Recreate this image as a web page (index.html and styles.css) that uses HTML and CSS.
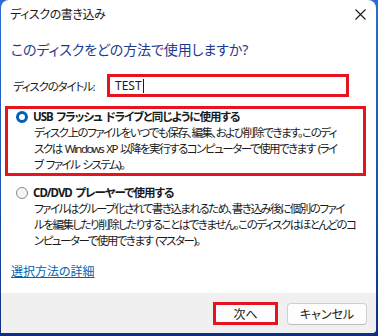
FILE: index.html
```html
<!DOCTYPE html>
<html lang="ja">
<head>
    <meta charset="utf-8">
    <title>ディスクの書き込み</title>
    <link rel="stylesheet" href="styles.css">
</head>
<body>

<div class="window">
    <header class="titlebar">
        <span>ディスクの書き込み</span>
        <svg class="close" width="11" height="11" viewBox="0 0 11 11" aria-hidden="true">
            <path d="M0.5 0.5 L10.5 10.5 M10.5 0.5 L0.5 10.5" stroke="#1a1a1a" stroke-width="1.1" fill="none"/>
        </svg>
    </header>

    <div class="content">
        <h1 class="instruction">このディスクをどの方法で使用しますか?</h1>

        <div class="title-row">
            <label for="disc-title">ディスクのタイトル:</label>
            <div class="input mark">TEST<span class="caret"></span></div>
        </div>

        <div class="option mark">
            <span class="radio checked"></span>
            <div>
                <div class="opt-title">USB フラッシュ ドライブと同じように使用する</div>
                <div class="opt-desc">ディスク上のファイルをいつでも保存、編集、および削除できます。このディ<br>スクは Windows XP 以降を実行するコンピューターで使用できます (ライ<br>ブ ファイル システム)。</div>
            </div>
        </div>

        <div class="option">
            <span class="radio"></span>
            <div>
                <div class="opt-title">CD/DVD プレーヤーで使用する</div>
                <div class="opt-desc">ファイルはグループ化されて書き込まれるため、書き込み後に個別のファイ<br>ルを編集したり削除したりすることはできません。このディスクはほとんどのコ<br>ンピューターで使用できます (マスター)。</div>
            </div>
        </div>

        <a class="help" href="#">選択方法の詳細</a>
    </div>

    <footer class="buttons">
        <button class="btn mark">次へ</button>
        <button class="btn">キャンセル</button>
    </footer>
</div>

</body>
</html>
```

FILE: styles.css
```css
:root {
    --red: #e5141f;
    --ui: "Noto Sans", "Noto Sans CJK JP", sans-serif;
}

body {
    margin: 0;
    width: 378px;
    height: 336px;
    overflow: hidden;
    background: linear-gradient(180deg, #2a6fd0, #1a4fae 60%, #0d2f80);
    font-family: var(--ui);
    font-size: 12px;
    font-feature-settings: "palt";
    color: #1a1a1a;
}

.window {
    display: flex;
    flex-direction: column;
    width: 375px;
    height: 333px;
    margin-left: 1px;
    background: white;
    border-radius: 8px 8px 4px 0;
    overflow: hidden;
}

.titlebar {
    display: flex;
    align-items: center;
    justify-content: space-between;
    height: 29px;
    padding: 0 9px 0 9px;
    flex: none;
    letter-spacing: -0.4px;
}

.titlebar span {
    line-height: 16px;
}

.close {
    margin-right: 1px;
}

.content {
    flex: 1;
    min-height: 0;
    overflow: hidden;
    padding: 0 9px 0 4px;
}

.instruction {
    margin: 11px 0 0 6px;
    font-size: 14px;
    font-weight: normal;
    line-height: 20px;
    letter-spacing: -0.1px;
    color: #1e3a8e;
}

.title-row {
    display: flex;
    align-items: center;
    margin: 14px 0 0 8px;
    font-size: 11.5px;
    letter-spacing: -1.2px;
}

.title-row label {
    width: 94px;
    flex: none;
    white-space: nowrap;
}

.mark {
    border: 3px solid var(--red);
}

.input {
    box-sizing: border-box;
    width: 242px;
    height: 23px;
    padding-left: 5px;
    line-height: 17px;
    font-size: 12px;
    letter-spacing: 0;
}

.caret {
    display: inline-block;
    width: 1px;
    height: 14px;
    margin-left: 1px;
    vertical-align: -3px;
    background: #1a1a1a;
}

.option {
    display: flex;
    align-items: flex-start;
    width: 361px;
    box-sizing: border-box;
    border: 3px solid transparent;
    padding-left: 8px;
    font-size: 11.5px;
    word-spacing: 1.5px;
}

.option.mark {
    margin-top: 9px;
    border-color: var(--red);
}

.option + .option {
    margin-top: 6px;
}

.radio {
    box-sizing: border-box;
    width: 12px;
    height: 12px;
    margin: 2px 5px 0 0;
    flex: none;
    border: 1px solid #8a8a8a;
    border-radius: 50%;
    background: #f5f5f5;
}

.radio.checked {
    border: 3.5px solid #005fb8;
    background: white;
}

.opt-title {
    font-weight: bold;
    line-height: 16px;
    letter-spacing: -1px;
    white-space: nowrap;
}

.opt-desc {
    white-space: nowrap;
    line-height: 16px;
    margin-left: 1px;
    letter-spacing: -1.5px;
}

.help {
    display: inline-block;
    margin: 12px 0 0 6px;
    line-height: 16px;
    color: #0063b1;
    text-decoration: underline;
}

.buttons {
    display: flex;
    justify-content: flex-end;
    gap: 9px;
    height: 40px;
    padding: 10px 9px 0 0;
    box-sizing: border-box;
    flex: none;
    background: #f0f0f0;
}

.btn {
    box-sizing: border-box;
    width: 80px;
    height: 22px;
    padding: 0;
    font: inherit;
    color: #1a1a1a;
    background: #fdfdfd;
    border: 1px solid #d0d0d0;
    border-bottom-color: #bdbdbd;
    border-radius: 4px;
}

.btn.mark {
    width: 65px;
    height: 23px;
    border: 3px solid var(--red);
    border-radius: 0;
    margin-top: -1px;
}
```
